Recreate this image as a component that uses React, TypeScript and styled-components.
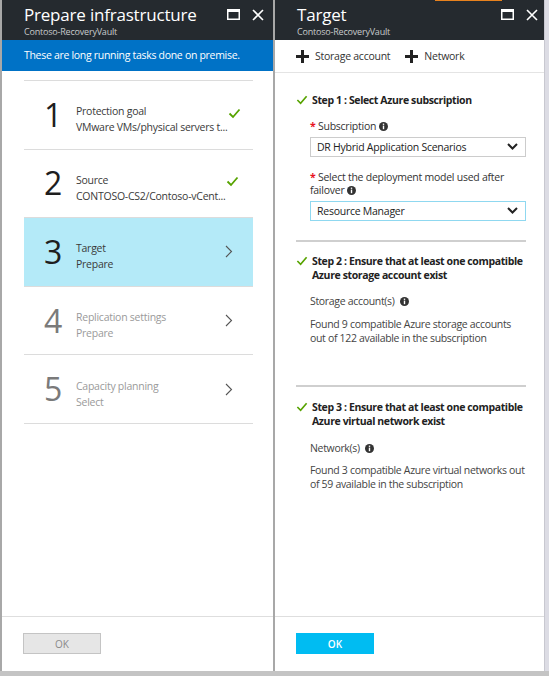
import styled, { createGlobalStyle } from 'styled-components';

const GlobalStyle = createGlobalStyle`
  *, *::before, *::after {
    box-sizing: border-box;
  }
  html, body {
    margin: 0;
    padding: 0;
    background: #ffffff;
  }
  body {
    font-family: "Open Sans", "Noto Sans", sans-serif;
    font-size: 11px;
    color: #333;
  }
`;

const steps = [
  { n: 1, title: 'Protection goal', sub: 'VMware VMs/physical servers t...', state: 'done' },
  { n: 2, title: 'Source', sub: 'CONTOSO-CS2/Contoso-vCent...', state: 'done' },
  { n: 3, title: 'Target', sub: 'Prepare', state: 'active' },
  { n: 4, title: 'Replication settings', sub: 'Prepare', state: 'todo' },
  { n: 5, title: 'Capacity planning', sub: 'Select', state: 'todo' },
];

function MaxIcon() {
  return (
    <svg width="13" height="11" viewBox="0 0 13 11">
      <rect x="0.75" y="0.75" width="11.5" height="9.5" fill="none" stroke="#fff" strokeWidth="1.5" />
      <rect x="0" y="0" width="13" height="3" fill="#fff" />
    </svg>
  );
}

function CloseIcon() {
  return (
    <svg width="12" height="12" viewBox="0 0 12 12">
      <path d="M1 1 L11 11 M11 1 L1 11" stroke="#fff" strokeWidth="1.6" />
    </svg>
  );
}

function Check({ size = 13 }: { size?: number }) {
  return (
    <svg width={size} height={size} viewBox="0 0 13 13">
      <path d="M1.5 6.5 L5 10 L11.5 2.5" fill="none" stroke="#57a300" strokeWidth="1.8" />
    </svg>
  );
}

function Chevron() {
  return (
    <svg width="8" height="13" viewBox="0 0 8 13">
      <path d="M1 1 L6.5 6.5 L1 12" fill="none" stroke="#555" strokeWidth="1.1" />
    </svg>
  );
}

function DownChevron() {
  return (
    <svg width="11" height="7" viewBox="0 0 11 7">
      <path d="M1 1 L5.5 5.5 L10 1" fill="none" stroke="#222" strokeWidth="2" />
    </svg>
  );
}

function Plus() {
  return (
    <svg width="13" height="13" viewBox="0 0 13 13">
      <rect x="5" y="0" width="3" height="13" fill="#222" />
      <rect x="0" y="5" width="13" height="3" fill="#222" />
    </svg>
  );
}

function Info() {
  return (
    <svg width="9" height="9" viewBox="0 0 9 9">
      <circle cx="4.5" cy="4.5" r="4.5" fill="#333" />
      <rect x="3.8" y="3.6" width="1.4" height="3.6" fill="#fff" />
      <rect x="3.8" y="1.6" width="1.4" height="1.3" fill="#fff" />
    </svg>
  );
}

export default function App() {
  return (
    <>
      <GlobalStyle />
      <Screen>
        <Blades>
          <LeftBlade>
            <Header $padRight={9}>
              <HeaderText>
                <Title>Prepare infrastructure</Title>
                <Subtitle>Contoso-RecoveryVault</Subtitle>
              </HeaderText>
              <HeaderIcons>
                <MaxIcon />
                <CloseIcon />
              </HeaderIcons>
            </Header>
            <Banner>These are long running tasks done on premise.</Banner>
            <Body>
              <StepList>
                {steps.map((s) => (
                  <StepRow key={s.n} $active={s.state === 'active'}>
                    <StepNumber $dim={s.state === 'todo'}>{s.n}</StepNumber>
                    <StepText $dim={s.state === 'todo'}>
                      <div>{s.title}</div>
                      <div>{s.sub}</div>
                    </StepText>
                    <StepIcon $done={s.state === 'done'}>
                      {s.state === 'done' ? <Check /> : <Chevron />}
                    </StepIcon>
                  </StepRow>
                ))}
              </StepList>
            </Body>
            <Footer>
              <OkButton $primary={false}>OK</OkButton>
            </Footer>
          </LeftBlade>

          <RightBlade>
            <TopAccent />
            <Header $padRight={6}>
              <HeaderText>
                <Title>Target</Title>
                <Subtitle>Contoso-RecoveryVault</Subtitle>
              </HeaderText>
              <HeaderIcons>
                <MaxIcon />
                <CloseIcon />
              </HeaderIcons>
            </Header>
            <Toolbar>
              <ToolItem>
                <Plus />
                Storage account
              </ToolItem>
              <ToolItem>
                <Plus />
                Network
              </ToolItem>
            </Toolbar>
            <Body>
              <Form>
                <Section $top={20} $bottom={19}>
                  <StepHeading>
                    <Check size={12} />
                    <span>Step 1 : Select Azure subscription</span>
                  </StepHeading>
                  <Field $gap={13}>
                    <Label>
                      <Req>*</Req> Subscription <Info />
                    </Label>
                    <Select>
                      <span>DR Hybrid Application Scenarios</span>
                      <DownChevron />
                    </Select>
                  </Field>
                  <Field $gap={14}>
                    <Label>
                      <Req>*</Req> Select the deployment model used after failover <Info />
                    </Label>
                    <Select $focused>
                      <span>Resource Manager</span>
                      <DownChevron />
                    </Select>
                  </Field>
                </Section>
                <Divider />
                <Section $top={12} $bottom={40}>
                  <StepHeading>
                    <Check size={12} />
                    <span>Step 2 : Ensure that at least one compatible Azure storage account exist</span>
                  </StepHeading>
                  <Plain $gap={12}>
                    Storage account(s) <InfoGap><Info /></InfoGap>
                  </Plain>
                  <Plain $gap={9}>
                    Found 9 compatible Azure storage accounts out of 122 available in the subscription
                  </Plain>
                </Section>
                <Divider />
                <Section $top={13} $bottom={0}>
                  <StepHeading>
                    <Check size={12} />
                    <span>Step 3 : Ensure that at least one compatible Azure virtual network exist</span>
                  </StepHeading>
                  <Plain $gap={13}>
                    Network(s) <InfoGap><Info /></InfoGap>
                  </Plain>
                  <Plain $gap={8}>
                    Found 3 compatible Azure virtual networks out of 59 available in the subscription
                  </Plain>
                </Section>
              </Form>
            </Body>
            <Footer>
              <OkButton $primary>OK</OkButton>
            </Footer>
          </RightBlade>
          <EdgeStrip />
        </Blades>
        <BottomStrip />
      </Screen>
    </>
  );
}

const Screen = styled.div`
  width: 549px;
  height: 676px;
  display: flex;
  flex-direction: column;
  overflow: hidden;
`;

const Blades = styled.div`
  display: flex;
  height: 671px;
`;

const LeftBlade = styled.div`
  width: 275px;
  flex: none;
  border-left: 2px solid #a8a8a8;
  border-right: 2px solid #a8a8a8;
  display: flex;
  flex-direction: column;
  background: #fff;
`;

const RightBlade = styled.div`
  position: relative;
  width: 269px;
  flex: none;
  display: flex;
  flex-direction: column;
  background: #fff;
`;

const TopAccent = styled.div`
  position: absolute;
  top: 0;
  left: 160px;
  width: 67px;
  height: 1px;
  background: #e8821e;
`;

const EdgeStrip = styled.div`
  flex: 1;
  background: #dcdce4;
  border-left: 1px solid #c8c8d0;
`;

const BottomStrip = styled.div`
  height: 5px;
  background: #c4c4c4;
`;

const Header = styled.div<{ $padRight: number }>`
  height: 40px;
  flex: none;
  background: #252a2f;
  display: flex;
  justify-content: space-between;
  padding: 0 ${(p) => p.$padRight}px 0 22px;
  color: #fff;
`;

const HeaderText = styled.div`
  display: flex;
  flex-direction: column;
  padding-top: 3px;
`;

const Title = styled.div`
  font-size: 17px;
  line-height: 23px;
  font-weight: 400;
  letter-spacing: -0.2px;
`;

const Subtitle = styled.div`
  font-size: 9px;
  line-height: 11px;
  color: #c8cacc;
  letter-spacing: -0.2px;
`;

const HeaderIcons = styled.div`
  display: flex;
  align-items: flex-start;
  gap: 12px;
  padding-top: 9px;
`;

const Banner = styled.div`
  height: 31px;
  flex: none;
  background: #0072c6;
  color: #fff;
  font-size: 10.5px;
  line-height: 31px;
  padding-left: 22px;
  letter-spacing: -0.3px;
`;

const Body = styled.div`
  flex: 1;
`;

const StepList = styled.div`
  margin: 9px 20px 0 22px;
  border-top: 1px solid #dcdcdc;
`;

const StepRow = styled.div<{ $active: boolean }>`
  height: 68.6px;
  border-bottom: 1px solid #dcdcdc;
  background: ${(p) => (p.$active ? '#b4eaf8' : '#fff')};
  display: grid;
  grid-template-columns: 52px 1fr 28px;
  align-items: center;
`;

const StepNumber = styled.div<{ $dim: boolean }>`
  font-size: 32px;
  line-height: 32px;
  padding-left: 20px;
  color: ${(p) => (p.$dim ? '#7a7a7a' : '#1e1e1e')};
`;

const StepText = styled.div<{ $dim: boolean }>`
  font-size: 10.5px;
  line-height: 16px;
  letter-spacing: -0.25px;
  color: ${(p) => (p.$dim ? '#9a9a9a' : '#3a3a3a')};
  white-space: nowrap;
  padding-top: 9px;
`;

const StepIcon = styled.div<{ $done: boolean }>`
  display: flex;
  align-items: center;
  padding-bottom: ${(p) => (p.$done ? '3px' : '0')};
`;

const Footer = styled.div`
  height: 55px;
  flex: none;
  border-top: 1px solid #dedede;
  padding: 16px 0 0 21px;
`;

const OkButton = styled.button<{ $primary: boolean }>`
  width: 78px;
  height: 21px;
  padding: 0;
  font-family: "Open Sans", "Noto Sans", sans-serif;
  font-size: 10px;
  border: 1px solid ${(p) => (p.$primary ? '#00bcf2' : '#c4c4c4')};
  background: ${(p) => (p.$primary ? '#00bcf2' : '#e6e6e6')};
  color: ${(p) => (p.$primary ? '#fff' : '#8a8a8a')};
  font-weight: ${(p) => (p.$primary ? 600 : 400)};
`;

const Toolbar = styled.div`
  height: 33px;
  flex: none;
  border-bottom: 1px solid #e4e4e4;
  display: flex;
  align-items: center;
  gap: 15px;
  padding-left: 21px;
`;

const ToolItem = styled.div`
  display: flex;
  align-items: center;
  gap: 6px;
  font-size: 10.5px;
  letter-spacing: -0.25px;
  color: #333;
`;

const Form = styled.div`
  margin: 0 18px 0 21px;
`;

const Section = styled.div<{ $top: number; $bottom: number }>`
  padding: ${(p) => p.$top}px 0 ${(p) => p.$bottom}px;
`;

const StepHeading = styled.div`
  display: flex;
  align-items: flex-start;
  gap: 4px;
  font-size: 10.5px;
  line-height: 14px;
  font-weight: 700;
  color: #222;
  letter-spacing: -0.38px;

  svg {
    flex: none;
    margin-top: 1px;
  }
`;

const Field = styled.div<{ $gap: number }>`
  margin: ${(p) => p.$gap}px 0 0 14px;
`;

const Label = styled.div`
  font-size: 10.5px;
  line-height: 13.5px;
  letter-spacing: -0.25px;
  color: #333;
  margin-bottom: 3px;

  svg {
    vertical-align: -1px;
  }
`;

const Req = styled.span`
  color: #e81123;
  font-weight: 700;
  line-height: 1;
`;

const Select = styled.div<{ $focused?: boolean }>`
  height: 20px;
  border: 1px solid ${(p) => (p.$focused ? '#8fd8f0' : '#cccccc')};
  display: flex;
  align-items: center;
  justify-content: space-between;
  padding: 0 7px 0 6px;
  font-size: 10.5px;
  letter-spacing: -0.25px;
  color: #222;
`;

const Divider = styled.div`
  height: 2px;
  background: #cfcfcf;
`;

const Plain = styled.div<{ $gap: number }>`
  margin: ${(p) => p.$gap}px 0 0 14px;
  font-size: 10.5px;
  line-height: 14px;
  letter-spacing: -0.32px;
  color: #444;
`;

const InfoGap = styled.span`
  margin-left: 3px;
  svg {
    vertical-align: -1px;
  }
`;
